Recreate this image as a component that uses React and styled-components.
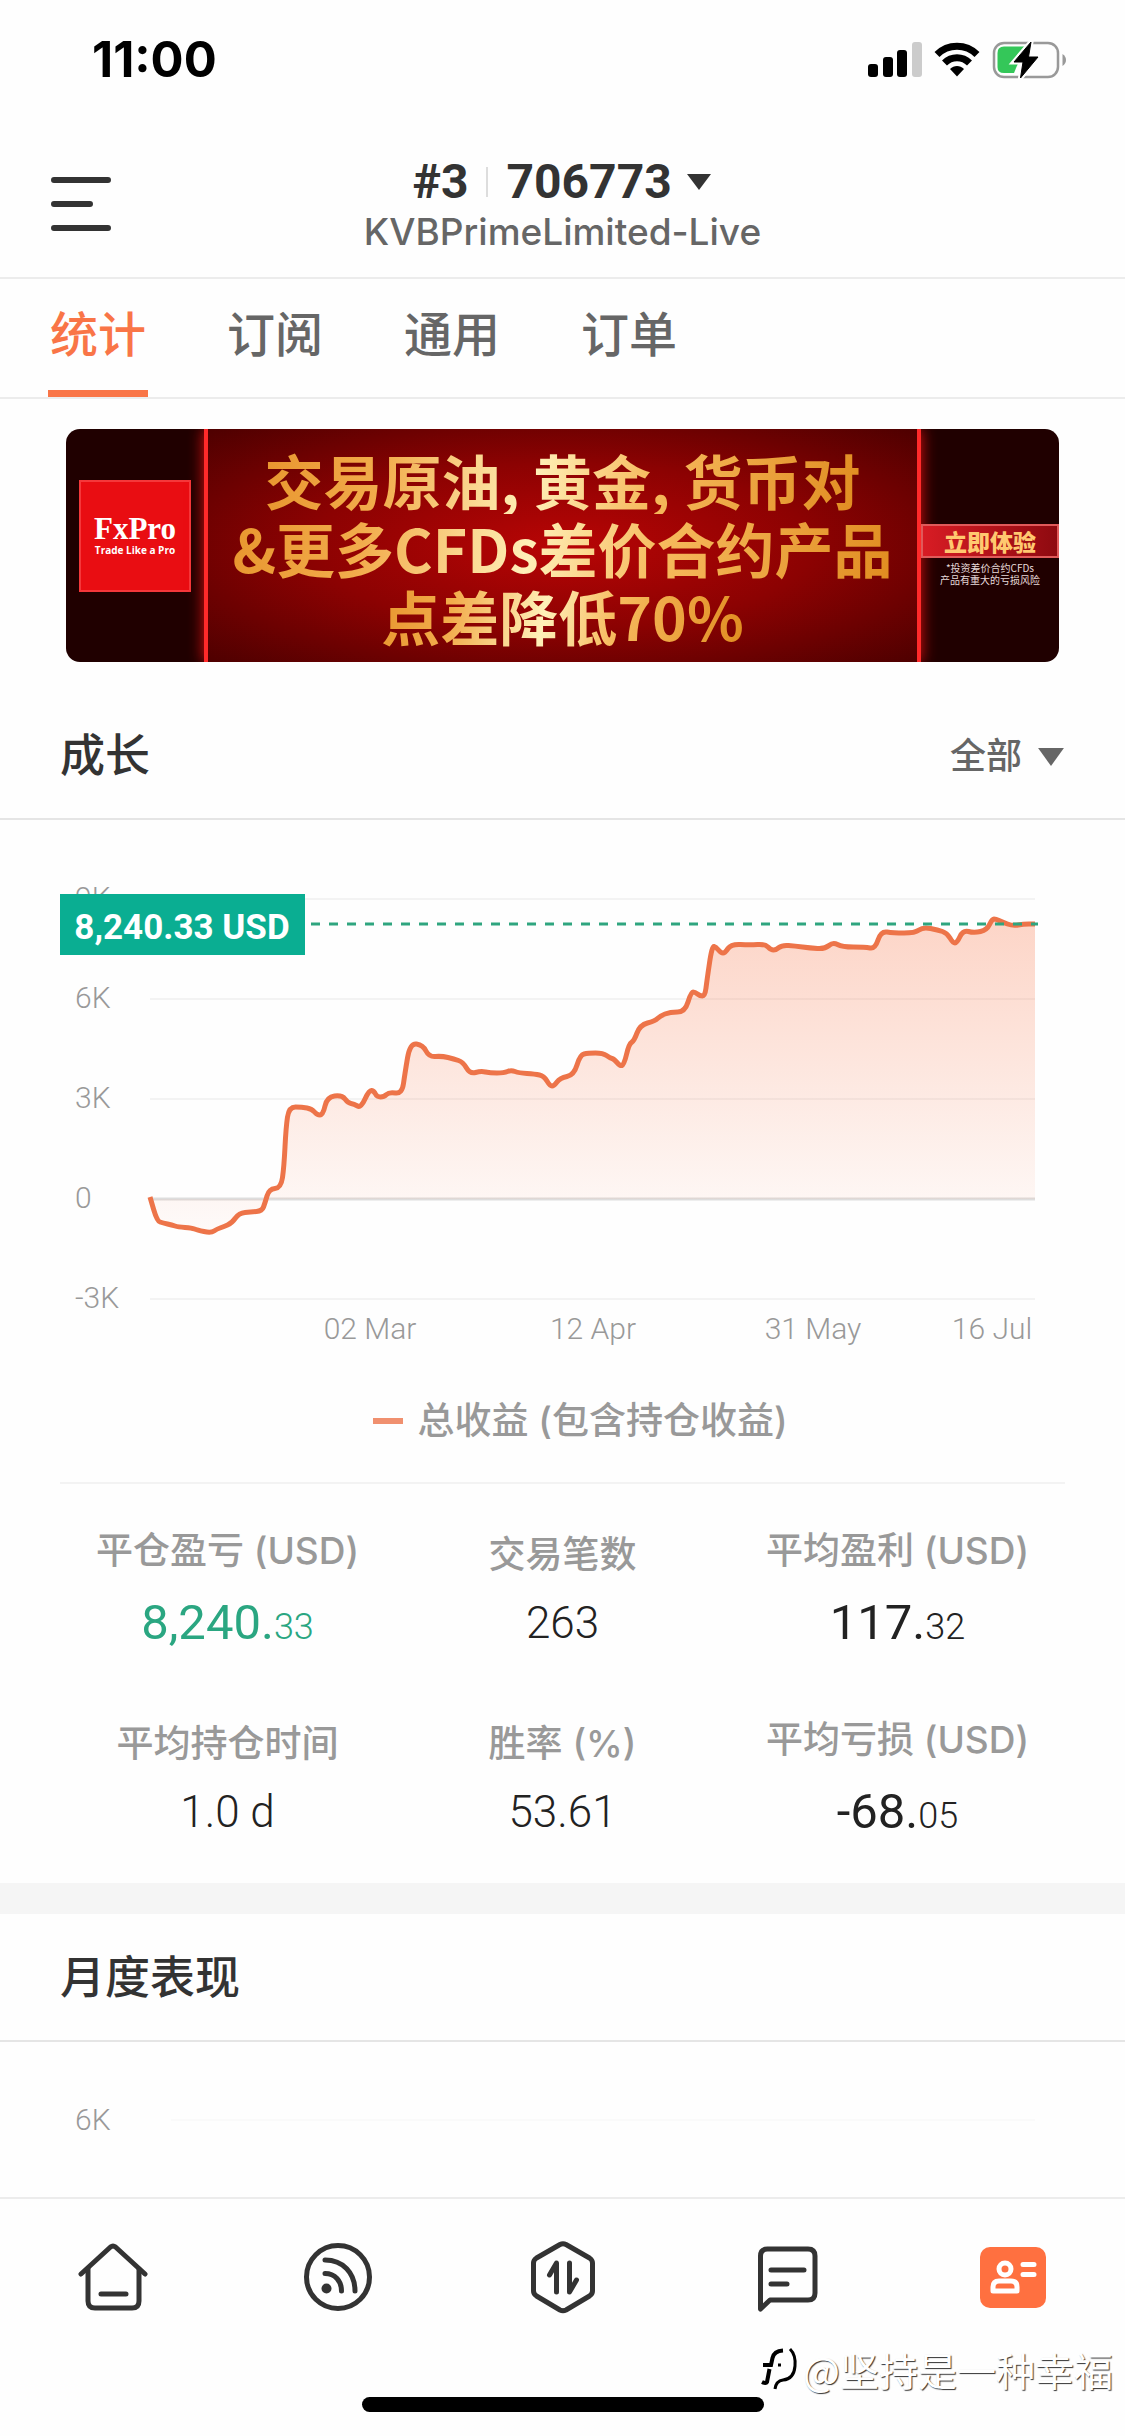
import { useState } from 'react';
import styled, { createGlobalStyle } from 'styled-components';

const GlobalStyle = createGlobalStyle`
  * {
    box-sizing: border-box;
    margin: 0;
    padding: 0;
  }
  body {
    background: #fefefe;
    color: #333;
    font-family: Roboto, 'Noto Sans CJK SC', sans-serif;
  }
  ul {
    list-style: none;
  }
  a {
    color: inherit;
    text-decoration: none;
  }
  button, select {
    border: 0;
    background: none;
    color: inherit;
    font: inherit;
    cursor: pointer;
  }
  select {
    appearance: none;
  }
  svg {
    display: block;
  }
`

const Page = styled.div`
  position: relative;
  display: flex;
  flex-direction: column;
  min-height: 100vh;
`
const StatusBar = styled.div`
  display: flex;
  align-items: center;
  justify-content: space-between;
  height: 120px;
  padding: 0 58px 0 92px;
  color: #000;
`
const Clock = styled.time`
  font: 700 49px/60px Inter, sans-serif;
`
const StatusIcons = styled.div`
  display: flex;
  align-items: center;
  gap: 12px;
`
const HeaderWrap = styled.header`
  display: grid;
  grid-template-columns: 1fr auto 1fr;
  align-items: center;
  height: 159px;
  padding: 10px 48px 0;
  border-bottom: 2px solid #ececec;
`
const MenuButton = styled.button`
  justify-self: start;
  padding: 0 3px;
`
const Account = styled.div`
  display: flex;
  flex-direction: column;
  align-items: center;
`
const AccountRow = styled.div`
  display: flex;
  align-items: center;
  font: 700 48px/56px Roboto, sans-serif;
`
const Bar = styled.i`
  width: 2px;
  height: 30px;
  margin: 0 18px;
  background: #ddd;
`
const Picker = styled.label`
  display: flex;
  align-items: center;
  gap: 14px;
`
const Server = styled.p`
  font: 500 37px/44px Inter, sans-serif;
  color: #666;
`
const Tabs = styled.nav`
  display: flex;
  gap: 77px;
  padding: 0 48px;
  border-bottom: 2px solid #ececec;
  a {
    height: 118px;
    padding: 0 2px;
    border-bottom: 7px solid transparent;
    font-size: 48px;
    font-weight: 500;
    line-height: 114px;
    color: #666;
  }
  a[aria-current='page'] {
    border-color: #f97547;
    color: #f97547;
  }
`
const Main = styled.main`
  flex: 1;
`
const Banner = styled.a`
  display: flex;
  align-items: center;
  height: 233px;
  margin: 30px 66px;
  border-radius: 14px;
  overflow: hidden;
  background: #200000;
`
const BannerSide = styled.div`
  flex: none;
  display: flex;
  flex-direction: column;
  align-items: center;
  width: 138px;
  text-align: center;
`
const FxLogo = styled.div`
  display: flex;
  flex-direction: column;
  justify-content: center;
  width: 112px;
  height: 112px;
  margin-bottom: 20px;
  border: 2px solid #f5373a;
  background: #e90d12;
  color: #fff;
  strong {
    font: 700 31px/28px 'Liberation Serif', serif;
  }
  small {
    font: 700 10px/14px 'Open Sans', sans-serif;
  }
`
const BannerCopy = styled.div`
  flex: 1;
  display: flex;
  flex-direction: column;
  align-items: center;
  justify-content: center;
  align-self: stretch;
  padding-top: 4px;
  border: solid #ff2a2a;
  border-width: 0 4px;
  box-shadow: 0 0 14px #e01010;
  background: radial-gradient(ellipse at center, #b80505 0%, #8c0202 50%, #4e0000 100%);
  font: 700 59px/68px 'Noto Sans CJK SC', sans-serif;
  white-space: nowrap;
  span {
    background: linear-gradient(100deg, #e8962e 0%, #f2ac4c 20%, #fff0b8 45%, #f6b95c 65%, #e08c20 100%);
    background-clip: text;
    color: transparent;
  }
`
const TryNow = styled.span`
  width: 100%;
  margin-top: 18px;
  border: 2px solid #e05a5a;
  background: linear-gradient(90deg, #d81c24, #8e0a10);
  color: #ffc870;
  font: 900 23px/30px 'Noto Sans CJK SC', sans-serif;
`
const Risk = styled.small`
  margin-top: 4px;
  color: #e6dada;
  font: 10px/12px 'Noto Sans CJK SC', sans-serif;
`
const SectionHead = styled.div`
  display: flex;
  align-items: center;
  justify-content: space-between;
  height: 128px;
  padding: 4px 60px 0;
  border-bottom: 2px solid #e5e5e5;
  h2 {
    font-size: 45px;
    font-weight: 500;
    line-height: 60px;
  }
`
const Period = styled(Picker)`
  font-size: 36px;
  font-weight: 500;
  line-height: 52px;
  color: #666;
`
const ChartBox = styled.figure`
  padding: 60px 60px 0;
  svg {
    width: 100%;
    height: auto;
  }
  text {
    font: 300 30px Roboto, sans-serif;
    fill: #999;
  }
  .tag {
    font: 700 35px Roboto, sans-serif;
    fill: #fff;
  }
`
const Legend = styled.figcaption`
  display: flex;
  align-items: center;
  justify-content: center;
  gap: 14px;
  height: 124px;
  padding-left: 36px;
  border-bottom: 2px solid #f3f3f3;
  font: 500 37px/50px Inter, 'Noto Sans CJK SC', sans-serif;
  color: #999;
  i {
    width: 30px;
    height: 6px;
    background: #f0906f;
  }
`
const Stats = styled.dl`
  display: grid;
  grid-template-columns: repeat(3, 1fr);
  align-items: center;
  row-gap: 62px;
  padding: 42px 60px 41px;
  text-align: center;
  dt {
    margin-bottom: 17px;
    font: 500 37px/50px Inter, 'Noto Sans CJK SC', sans-serif;
    color: #999;
  }
`
const Value = styled.dd`
  font-size: ${({ $big }) => ($big ? 49 : 44)}px;
  font-weight: ${({ $big }) => ($big ? 400 : 300)};
  line-height: ${({ $big }) => ($big ? 60 : 52)}px;
  color: ${({ $up }) => ($up ? '#2aa681' : '#222')};
  small {
    font-size: 36px;
    font-weight: 300;
    line-height: 36px;
  }
`
const Monthly = styled.section`
  border-top: 31px solid #f5f5f5;
`
const MonthlyRow = styled.div`
  display: flex;
  align-items: center;
  gap: 60px;
  padding: 60px 90px 58px 75px;
  font: 300 30px/36px Roboto, sans-serif;
  color: #999;
  hr {
    flex: 1;
    border: 0;
    border-top: 2px solid #fafafa;
  }
`
const BottomNav = styled.nav`
  display: flex;
  flex-direction: column;
  align-items: center;
  height: 239px;
  border-top: 2px solid #ececec;
  ul {
    display: grid;
    grid-template-columns: repeat(5, 1fr);
    width: 100%;
    margin-bottom: 83px;
  }
  a {
    display: flex;
    justify-content: center;
    padding-top: 42px;
  }
`
const HomeBar = styled.div`
  width: 402px;
  height: 15px;
  border-radius: 8px;
  background: #000;
`
const Watermark = styled.div`
  position: absolute;
  right: 12px;
  bottom: 40px;
  display: flex;
  align-items: center;
  gap: 4px;
  font: 400 39px/54px 'Noto Sans CJK SC', sans-serif;
  color: #fff;
  text-shadow: 1px 1px 1px #333;
`

const tabs = ['统计', '订阅', '通用', '订单'];

const stats = [
  { label: '平仓盈亏 (USD)', value: '8,240.', cents: '33', up: true },
  { label: '交易笔数', value: '263' },
  { label: '平均盈利 (USD)', value: '117.', cents: '32' },
  { label: '平均持仓时间', value: '1.0 d' },
  { label: '胜率 (%)', value: '53.61' },
  { label: '平均亏损 (USD)', value: '-68.', cents: '05' },
];

const growth = [
  [90, 317], [97, 341], [103, 343], [112, 345], [118, 347], [132, 348], [137, 350], [151, 353], [157, 349],
  [163, 347], [172, 343], [179, 333], [191, 332], [202, 331], [205, 323], [209, 309], [221, 308], [224, 287],
  [226, 247], [229, 227], [242, 227], [252, 229], [257, 235], [263, 235], [267, 217], [282, 215], [288, 223],
  [294, 224], [301, 228], [309, 210], [314, 211], [317, 217], [324, 217], [329, 212], [342, 214], [345, 193],
  [350, 163], [363, 165], [369, 177], [382, 176], [394, 179], [403, 182], [410, 194], [421, 191], [430, 193],
  [444, 193], [451, 190], [459, 193], [475, 194], [484, 196], [490, 206], [494, 206], [500, 198], [514, 195],
  [520, 175], [528, 173], [543, 173], [550, 178], [554, 179], [560, 186], [564, 185], [569, 164], [574, 161],
  [580, 145], [595, 141], [600, 136], [610, 132], [625, 132], [631, 112], [635, 112], [640, 116], [645, 116],
  [647, 100], [652, 66], [656, 67], [661, 73], [665, 73], [671, 64], [690, 65], [705, 64], [711, 70],
  [716, 70], [722, 65], [735, 66], [750, 68], [765, 69], [773, 62], [782, 67], [805, 67], [815, 69],
  [821, 51], [833, 53], [855, 53], [863, 47], [878, 50], [887, 53], [893, 63], [897, 63], [903, 50],
  [914, 53], [927, 50], [932, 39], [936, 39], [942, 42], [953, 46], [963, 44], [975, 44],
];
const yTicks = [['9K', 19], ['6K', 119], ['3K', 219], ['0', 319], ['-3K', 419]];
const xTicks = [['02 Mar', 310], ['12 Apr', 533], ['31 May', 753], ['16 Jul', 932]];

const Caret = ({ width = 26, height = 16, color = '#333' }) => (
  <svg width={width} height={height} viewBox='0 0 26 16' preserveAspectRatio='none' fill={color} aria-hidden='true'>
    <path d='M1 0H25L13 16z' />
  </svg>
);

function Status() {
  return (
    <StatusBar>
      <Clock>11:00</Clock>
      <StatusIcons>
        <svg width='54' height='36' viewBox='0 0 54 36'>
          <rect x='0' y='22' width='10' height='13' rx='3' />
          <rect x='15' y='15' width='10' height='20' rx='3' />
          <rect x='29' y='8' width='10' height='27' rx='3' />
          <rect x='44' y='0' width='10' height='35' rx='3' fill='#ccc' />
        </svg>
        <svg width='46' height='36' viewBox='0 0 46 36' fill='none' stroke='#000' strokeWidth='7'>
          <path d='M3 12.500C14 1.500 32 1.500 43 12.500' />
          <path d='M10.500 21C17.500 14 28.500 14 35.500 21' />
          <path d='M16 27C20 23 26 23 30 27L23 34.500z' fill='#000' stroke='none' />
        </svg>
        <svg width='75' height='38' viewBox='0 0 75 38'>
          <rect x='2' y='2' width='64' height='34' rx='10' fill='none' stroke='#999' strokeWidth='2.500' />
          <path d='M12 5.500H33L22 32H12Q5.500 32 5.500 26V12Q5.500 5.500 12 5.500z' fill='#34c759' />
          <path d='M70.500 13V25Q74 22.500 74 19T70.500 13z' fill='#999' />
          <path d='M39 1L22 21H31L28.500 37L46 16H36.500z' stroke='#fefefe' strokeWidth='5' />
          <path d='M39 1L22 21H31L28.500 37L46 16H36.500z' stroke='#000' strokeLinejoin='round' />
        </svg>
      </StatusIcons>
    </StatusBar>
  );
}

function Header() {
  return (
    <HeaderWrap>
      <MenuButton aria-label='菜单'>
        <svg width='60' height='54' viewBox='0 0 60 54' stroke='#333' strokeWidth='6' strokeLinecap='round'>
          <path d='M3 3H57M3 27H39M3 51H57' />
        </svg>
      </MenuButton>
      <Account>
        <AccountRow>
          <span>#3</span>
          <Bar />
          <Picker>
            <select aria-label='账户' defaultValue='706773'>
              <option>706773</option>
            </select>
            <Caret />
          </Picker>
        </AccountRow>
        <Server>KVBPrimeLimited-Live</Server>
      </Account>
    </HeaderWrap>
  );
}

function GrowthChart() {
  // 중간점을 지나는 곡선으로 부드럽게 연결
  const line = growth.reduce((d, [x, y], i) => {
    if (i === 0) return `M${x} ${y}`;
    const [px, py] = growth[i - 1];
    return `${d} Q${px} ${py} ${(px + x) / 2} ${(py + y) / 2}`;
  }, '') + ' L975 44';

  return (
    <ChartBox>
      <svg viewBox='0 0 1005 480' role='img' aria-label='总收益'>
        <defs>
          <linearGradient id='area' gradientUnits='userSpaceOnUse' x1='0' y1='40' x2='0' y2='360'>
            <stop offset='0' stopColor='#f97547' stopOpacity='0.300' />
            <stop offset='1' stopColor='#f97547' stopOpacity='0.020' />
          </linearGradient>
        </defs>
        {yTicks.map(([label, y]) => (
          <g key={label}>
            <path d={`M90 ${y}H975`} stroke={label === '0' ? '#ddd' : '#f3f3f3'} strokeWidth={label === '0' ? 3 : 2} />
            <text x='15' y={y + 9}>{label}</text>
          </g>
        ))}
        {xTicks.map(([label, x]) => (
          <text key={label} x={x} y='459' textAnchor='middle'>{label}</text>
        ))}
        <path d={`${line} V319 H90z`} fill='url(#area)' />
        <path d={line} fill='none' stroke='#ed7449' strokeWidth='5' strokeLinejoin='round' />
        <path d='M251 44H978' stroke='#2fa57f' strokeWidth='3' strokeDasharray='9 9' />
        <rect y='14' width='245' height='61' fill='#0aae92' />
        <text className='tag' x='122' y='59' textAnchor='middle'>8,240.33 USD</text>
      </svg>
      <Legend><i />总收益 (包含持仓收益)</Legend>
    </ChartBox>
  );
}

const navItems = [
  { name: '首页', icon: (
    <>
      <path d='M3 33L32.500 6Q35 4 37.500 6L67 33' />
      <path d='M10 28V60Q10 67 17 67H54Q61 67 61 60V28M23 53H48' />
    </>
  ) },
  { name: '信号', icon: (
    <>
      <circle cx='35' cy='36' r='31.500' />
      <path d='M22 19C40 19 52 32 52 50M22 32.500C32 32.500 38.500 40 38.500 50' />
      <circle cx='23.500' cy='47.500' r='5' fill='#333' stroke='none' />
    </>
  ) },
  { name: '交易', icon: (
    <>
      <path d='M32 3.500Q35 2 38 3.500L61.500 17Q64.500 19 64.500 22V50Q64.500 53 61.500 55L38 69Q35 70.500 32 69L8.500 55Q5.500 53 5.500 50V22Q5.500 19 8.500 17z' />
      <path d='M21.500 34L28.500 22V51M41.500 22V51L48.500 39' />
    </>
  ) },
  { name: '消息', icon: (
    <>
      <path d='M7.500 68V15Q7.500 8 14.500 8H55Q62 8 62 15V52Q62 59 55 59H17z' />
      <path d='M18 29H51M18 43H34' />
    </>
  ) },
];

function Footer() {
  return (
    <BottomNav>
      <ul>
        {navItems.map(({ name, icon }) => (
          <li key={name}>
            <a href='#' aria-label={name}>
              <svg width='70' height='73' viewBox='0 0 70 73' fill='none' stroke='#333' strokeWidth='5' strokeLinecap='round' strokeLinejoin='round'>{icon}</svg>
            </a>
          </li>
        ))}
        <li>
          <a href='#' aria-label='我的' aria-current='page'>
            <svg width='70' height='73' viewBox='0 0 70 73' fill='none' stroke='#fff' strokeWidth='5'>
              <rect x='2' y='6' width='66' height='61' rx='10' fill='#ff7040' stroke='none' />
              <circle cx='27' cy='28' r='6' />
              <path d='M15 50V46Q15 40 21 40H33Q39 40 39 46V50z' strokeLinejoin='round' />
              <path d='M45 23.500H56M45 33.500H56' strokeLinecap='round' />
            </svg>
          </a>
        </li>
      </ul>
      <HomeBar />
    </BottomNav>
  );
}

function App() {
  const [tab, setTab] = useState('统计');

  return (
    <Page>
      <GlobalStyle />
      <Status />
      <Header />
      <Tabs>
        {tabs.map(name => (
          <a key={name} href='#' aria-current={tab === name ? 'page' : undefined} onClick={() => setTab(name)}>{name}</a>
        ))}
      </Tabs>

      <Main>
        <Banner href='#'>
          <BannerSide>
            <FxLogo>
              <strong>FxPro</strong>
              <small>Trade Like a Pro</small>
            </FxLogo>
          </BannerSide>
          <BannerCopy>
            <span>交易原油, 黄金, 货币对</span>
            <span>&更多CFDs差价合约产品</span>
            <span>点差降低70%</span>
          </BannerCopy>
          <BannerSide>
            <TryNow>立即体验</TryNow>
            <Risk>*投资差价合约CFDs<br />产品有重大的亏损风险</Risk>
          </BannerSide>
        </Banner>

        <section>
          <SectionHead>
            <h2>成长</h2>
            <Period>
              <select aria-label='周期' defaultValue='全部'>
                <option>全部</option>
              </select>
              <Caret width={28} height={18} color='#666' />
            </Period>
          </SectionHead>
          <GrowthChart />
          <Stats>
            {stats.map(({ label, value, cents, up }) => (
              <div key={label}>
                <dt>{label}</dt>
                <Value $big={!!cents} $up={up}>{value}{cents && <small>{cents}</small>}</Value>
              </div>
            ))}
          </Stats>
        </section>

        <Monthly>
          <SectionHead>
            <h2>月度表现</h2>
          </SectionHead>
          <MonthlyRow>6K<hr /></MonthlyRow>
        </Monthly>
      </Main>

      <Footer />
      <Watermark>
        <svg width='38' height='44' viewBox='0 0 38 44' fill='none' stroke='#000' strokeWidth='3'>
          <path d='M22 3.500Q13 4 11.500 11L10 18H2M8.500 22L6 35Q5 37 1 35' strokeWidth='4' />
          <path d='M29 2Q35 8 34 19Q33 32 22 33Q15 34 14 42' />
          <path d='M17 18H20' />
        </svg>
        @坚持是一种幸福
      </Watermark>
    </Page>
  );
}

export default App;
